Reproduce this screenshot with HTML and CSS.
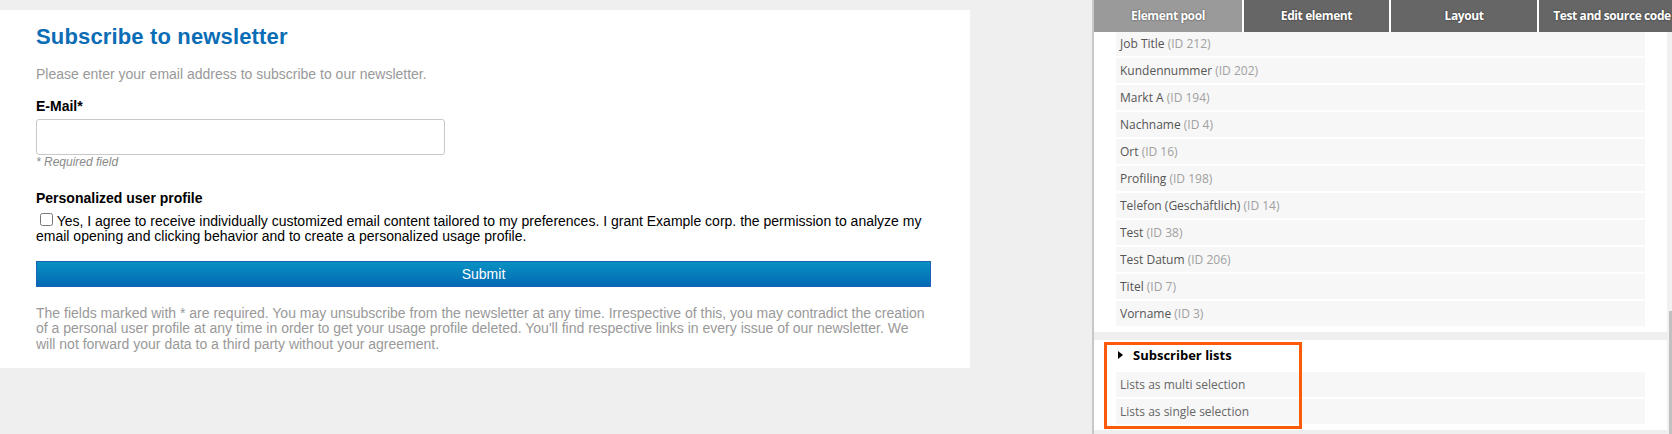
FILE: index.html
```html
<!DOCTYPE html>
<html lang="en">
<head>
  <meta charset="UTF-8" />
  <title>Newsletter form editor</title>
  <link rel="stylesheet" href="styles.css">
</head>
<body>
  <main class="preview">
    <form class="form-card" onsubmit="return false">
      <h1>Subscribe to newsletter</h1>
      <p class="intro">Please enter your email address to subscribe to our newsletter.</p>

      <label class="field-label" for="email">E-Mail*</label>
      <input class="text-input" type="email" id="email" />
      <div class="hint">* Required field</div>

      <h2 class="group-title">Personalized user profile</h2>
      <label class="consent"><input type="checkbox" /> Yes, I agree to receive individually customized email content tailored to my preferences. I grant Example corp. the permission to analyze my email opening and clicking behavior and to create a personalized usage profile.</label>

      <button class="submit" type="submit">Submit</button>

      <p class="legal">The fields marked with * are required. You may unsubscribe from the newsletter at any time. Irrespective of this, you may contradict the creation of a personal user profile at any time in order to get your usage profile deleted. You'll find respective links in every issue of our newsletter. We will not forward your data to a third party without your agreement.</p>
    </form>
  </main>

  <aside class="panel">
    <nav class="tabs">
      <div class="tab active">Element pool</div>
      <div class="tab">Edit element</div>
      <div class="tab">Layout</div>
      <div class="tab last">Test and source code</div>
    </nav>

    <div class="pool">
      <section class="pool-box fields">
        <div class="item">Job Title <span class="id">(ID 212)</span></div>
        <div class="item">Kundennummer <span class="id">(ID 202)</span></div>
        <div class="item">Markt A <span class="id">(ID 194)</span></div>
        <div class="item">Nachname <span class="id">(ID 4)</span></div>
        <div class="item">Ort <span class="id">(ID 16)</span></div>
        <div class="item">Profiling <span class="id">(ID 198)</span></div>
        <div class="item">Telefon (Geschäftlich) <span class="id">(ID 14)</span></div>
        <div class="item">Test <span class="id">(ID 38)</span></div>
        <div class="item">Test Datum <span class="id">(ID 206)</span></div>
        <div class="item">Titel <span class="id">(ID 7)</span></div>
        <div class="item">Vorname <span class="id">(ID 3)</span></div>
      </section>

      <section class="pool-box lists">
        <div class="box-title"><span class="arrow"></span>Subscriber lists</div>
        <div class="item">Lists as multi selection</div>
        <div class="item">Lists as single selection</div>
        <div class="highlight"></div>
      </section>

      <div class="scrollbar"><div class="thumb"></div></div>
    </div>
  </aside>
</body>
</html>
```

FILE: styles.css
```css
:root {
  --page: #efefef;
  --blue: #0b6db5;
  --muted: #999;
  --row: #f7f7f7;
  --tab: #666;
  --tab-active: #9a9a9a;
  --mark: #fd5a0a;
}
* {
  margin: 0;
  padding: 0;
  box-sizing: border-box;
}
body {
  display: flex;
  height: 434px;
  overflow: hidden;
  background: var(--page);
  font-family: "Liberation Sans", Arial, sans-serif;
  color: #000;
}

/* left: form preview */
.preview {
  flex: 1;
}
.form-card {
  width: 970px;
  margin-top: 10px;
  padding: 14px 39px 16px 36px;
  background: #fff;
  font-size: 14px;
}
h1 {
  font-size: 22px;
  line-height: 26px;
  letter-spacing: 0.15px;
  color: var(--blue);
}
.intro {
  margin-top: 16px;
  line-height: 16px;
  color: var(--muted);
}
.field-label {
  display: block;
  margin-top: 16px;
  line-height: 16px;
  font-weight: bold;
}
.text-input {
  display: block;
  width: 409px;
  height: 36px;
  margin-top: 5px;
  border: 1px solid #c8c8c8;
  border-radius: 3px;
  background: #fff;
}
.hint {
  font-size: 12px;
  line-height: 14px;
  font-style: italic;
  color: #8a8a8a;
}
.group-title {
  margin-top: 21px;
  font-size: 14px;
  line-height: 16px;
}
.consent {
  display: block;
  margin-top: 7px;
  line-height: 1.1;
}
.consent input {
  width: 13px;
  height: 13px;
  margin: 0 0 0 4px;
}
.submit {
  display: block;
  width: 100%;
  height: 26px;
  margin-top: 16px;
  border: 1px solid #1a62b6;
  background: linear-gradient(#0892c2, #0468b4);
  color: #fff;
  font-family: inherit;
  font-size: 14px;
}
.legal {
  margin-top: 19px;
  line-height: 1.1;
  color: var(--muted);
}

/* right: element pool panel */
.panel {
  display: flex;
  flex-direction: column;
  width: 580px;
  flex-shrink: 0;
  overflow: hidden;
  border-left: 2px solid #c8c8c8;
  background: #fff;
  font-family: "Open Sans", sans-serif;
}
.tabs {
  display: flex;
  gap: 2px;
  height: 32px;
}
.tab {
  flex-shrink: 0;
  width: 146px;
  background: var(--tab);
  color: #fff;
  font-size: 12px;
  font-weight: 700;
  letter-spacing: -0.4px;
  line-height: 32px;
  text-align: center;
  white-space: nowrap;
  text-shadow: 0 0 2px rgba(0,0,0,0.6);
}
.tab:nth-child(1) { width: 148px; }
.tab:nth-child(2) { width: 145px; }
.tab.active {
  background: var(--tab-active);
}
.pool {
  position: relative;
  flex: 1;
  overflow: hidden;
  padding-right: 5px;
  background: var(--page);
}
.pool-box {
  position: relative;
  display: flex;
  flex-direction: column;
  gap: 2px;
  padding: 0 22px 6px;
  background: #fff;
}
.fields {
  margin-top: -1px;
}
.lists {
  margin-top: 8px;
}
.item {
  height: 25px;
  padding-left: 4px;
  background: var(--row);
  font-size: 12px;
  line-height: 25px;
  color: #555;
}
.item .id {
  color: #a0a0a0;
}
.lists .item {
  color: #666;
}
.box-title {
  display: flex;
  align-items: center;
  gap: 10px;
  padding-left: 2px;
  font-size: 13px;
  font-weight: 700;
  line-height: 30px;
}
.arrow {
  width: 0;
  height: 0;
  border-top: 4px solid transparent;
  border-bottom: 4px solid transparent;
  border-left: 5px solid #000;
}
.highlight {
  position: absolute;
  left: 10px;
  top: 2px;
  width: 198px;
  height: 87px;
  border: 3px solid var(--mark);
  pointer-events: none;
}
.scrollbar {
  position: absolute;
  top: 0;
  right: 0;
  bottom: 0;
  width: 5px;
  background: #f1f1f1;
}
.thumb {
  position: absolute;
  top: 279px;
  bottom: 0;
  right: 0;
  width: 3px;
  background: #c1c1c1;
}
```
